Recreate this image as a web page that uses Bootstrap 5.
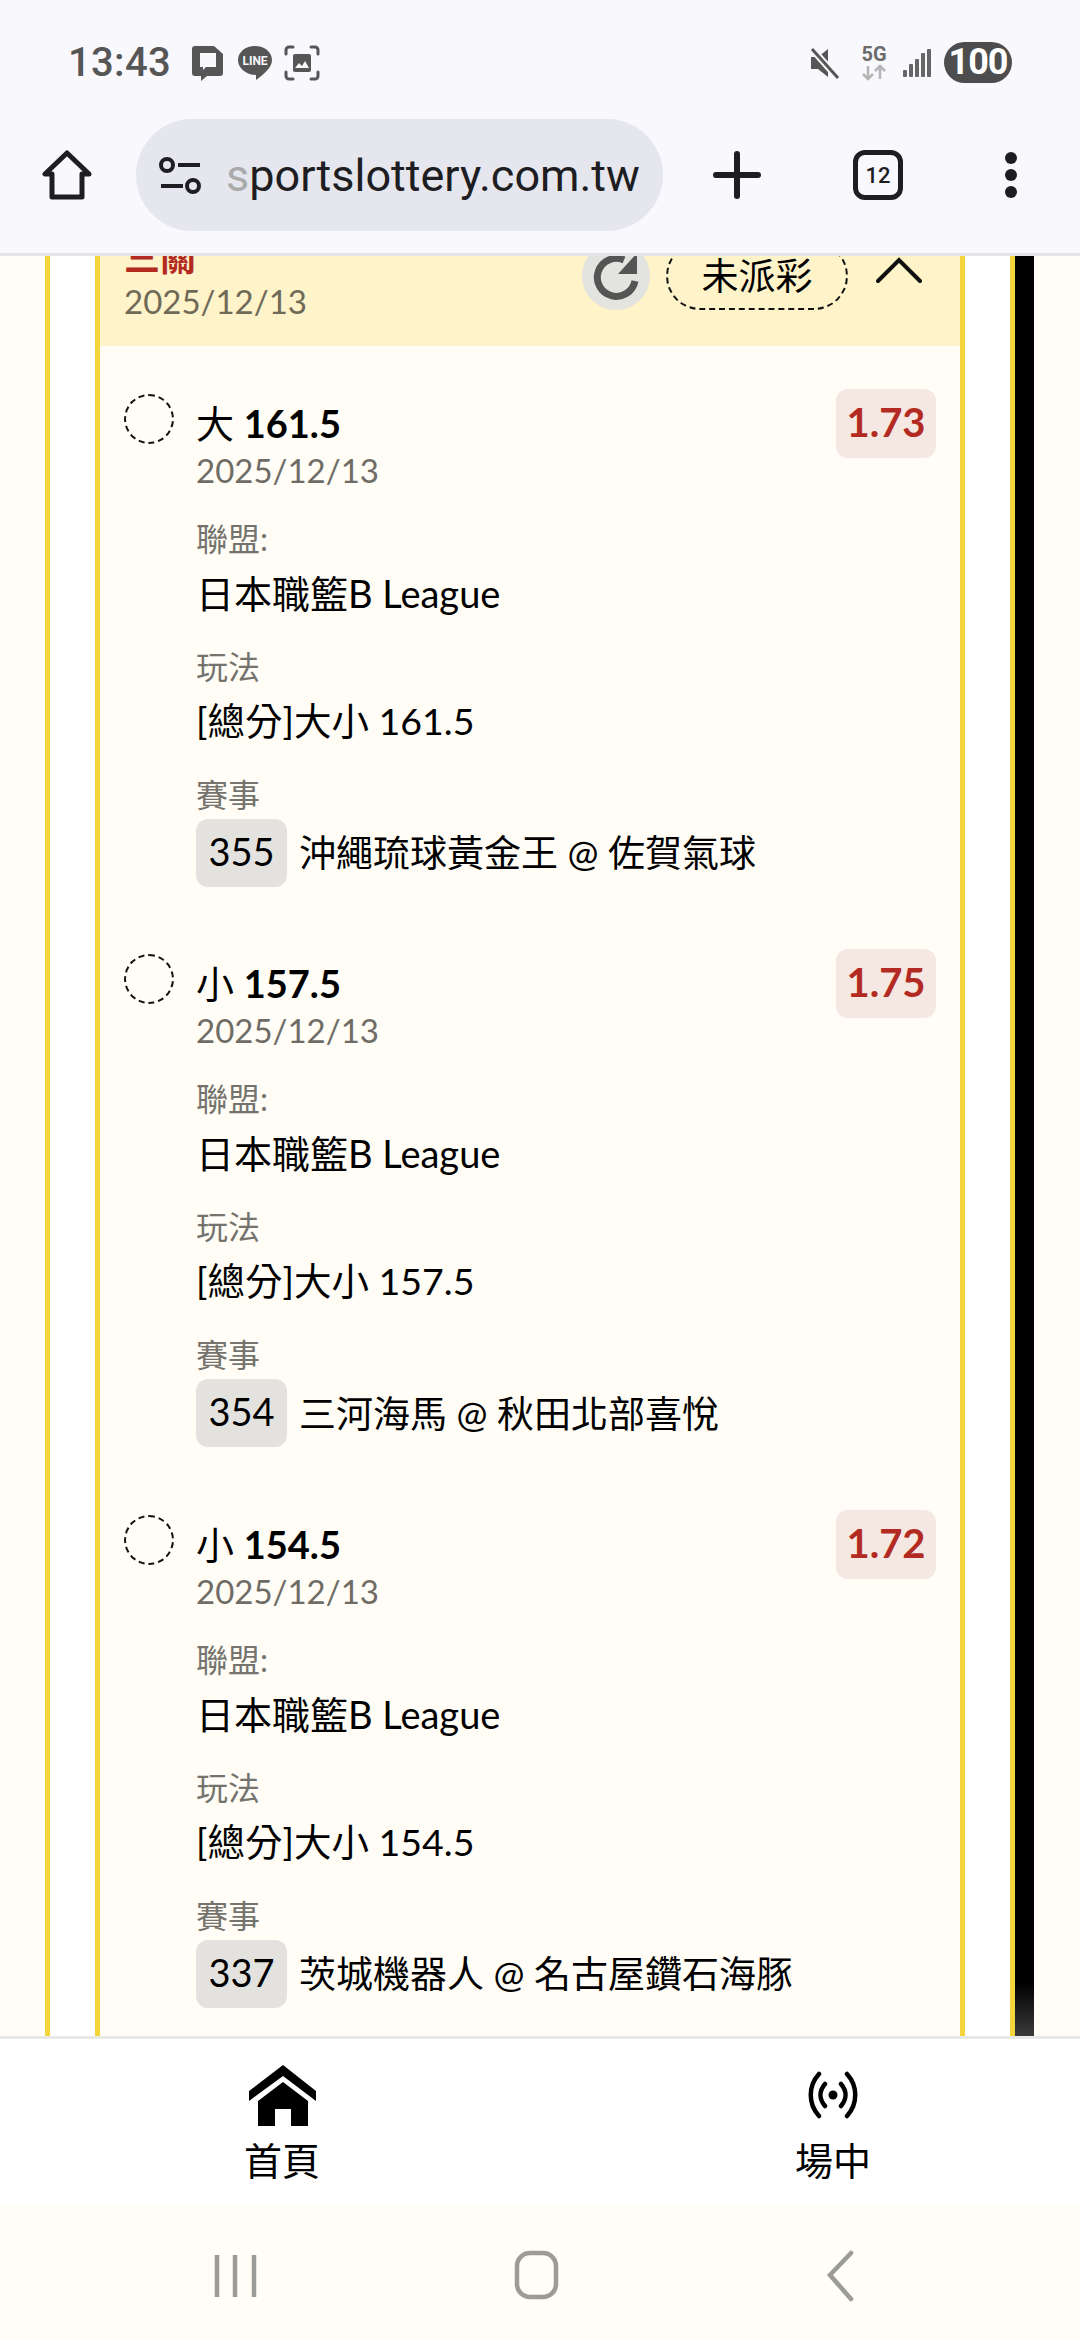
<!DOCTYPE html>
<html lang="zh-Hant">
<head>
<meta charset="utf-8">
<title>sportslottery</title>
<link href="https://cdn.jsdelivr.net/npm/bootstrap@5.3.0/dist/css/bootstrap.min.css" rel="stylesheet">
<style>
html,body{margin:0;height:2340px;overflow:hidden;background:#fffdf5;font-family:Lato,"Noto Sans CJK TC",sans-serif;color:#000}
.phone{width:1080px;height:2340px}
.chrome{height:256px;flex:none;background:#f8f8fd;border-bottom:3px solid #e4e4e8;position:relative;z-index:5}
.statusline{height:119px;padding:42px 68px 0 68px;color:#565656;font-family:Roboto,sans-serif}
.clock{font-size:40px;font-weight:500;line-height:42px;letter-spacing:.3px}
.ic-chat{margin-left:20px}
.ic-line{margin-left:13px}
.ic-scan{margin-left:11px}
.ic-5g{margin-left:20px}
.ic-bars{margin-left:15px}
.batt{background:#4d4d4d;color:#fff;font-weight:700;font-size:36px;letter-spacing:-1px;line-height:41px;height:41px;width:68px;border-radius:21px;text-align:center;margin-left:13px}
.toolbar{height:112px;padding:0 0 0 42px}
.urlpill{width:527px;height:112px;border-radius:56px;background:#e6e6ee;margin-left:44px;padding:2px 0 0 22px;font-family:Roboto,sans-serif;font-size:45px;color:#1d1d22;white-space:nowrap;overflow:hidden}
.urlicon{margin-right:22px}
.fade-s{color:#aaa}
.plusicon{margin-left:50px}
.tabcount{margin-left:92px;width:50px;height:50px;border:5px solid #1d1d22;border-radius:12px;font:500 22px Roboto,sans-serif;color:#1d1d22}
.dotsicon{margin-left:101px}
.stage{flex:1 1 auto;min-height:0;overflow:hidden;padding-left:45px}
.outercard{width:970px;flex:none;background:#fff;border-left:5px solid #f4d63c;border-right:5px solid #f4d63c;padding:0 45px}
.innercard{background:#fffdf5;border-left:5px solid #f4d63c;border-right:5px solid #f4d63c;min-height:2000px}
.scrollthumb{width:19px;flex:none;background:linear-gradient(#000 97%,#3a3a3a)}
.headband{background:#fff3c9;margin-top:-30px;height:120px;padding:0 38px 0 24px}
.redtitle{color:#b32a1f;font-weight:700;font-size:36px;line-height:46px;font-family:"Noto Sans CJK TC",sans-serif;padding-top:6px}
.greydate{color:#6f6a58;font-size:33px;line-height:40px;margin-top:3px}
.refreshbtn{width:68px;height:68px;border-radius:50%;background:#e3e3e0;margin-top:16px}
.statuspill{width:182px;height:68px;border:2px dashed #111;border-radius:34px;font-size:37px;margin:16px 0 0 16px;font-family:"Noto Sans CJK TC",sans-serif;line-height:60px;text-align:center}
.chev{margin:31px 0 0 28px}
.betlist{padding:53px 24px 0 24px}
.betrow{height:560.4px}
.radiodot{width:50px;height:50px;border:2px dashed #111;border-radius:50%;flex:none;margin-top:-5px}
.betbody{margin-left:22px}
.bettitle{font-size:38px;line-height:46px;padding-top:1px}
.bettitle b{font-weight:700}
.betdate{color:#6f6c66;font-size:33px;line-height:40px;margin-top:4px}
.fieldlabel{color:#75736d;font-size:32px;line-height:40px;margin-top:30px}
.fieldlabel.tight{margin-top:29px}
.fieldvalue{font-size:38px;line-height:48px;margin-top:10px}
.fieldvalue.rule{font-size:37.500px}
.tagnum{width:91px;height:68px;background:#e3e2de;border-radius:12px;font-size:38px;line-height:64px;text-align:center;margin-right:12px;flex:none}
.matchline{margin-top:4px;font-size:37px}
.oddsbox{width:100px;height:69px;background:#f5e8e2;border-radius:12px;color:#b22a22;font-weight:700;font-size:40px;line-height:67px;text-align:center;margin-top:-10px;flex:none}
.bottomnav{height:169px;flex:none;background:#fff;border-top:3px solid #e9e9e7;padding-left:232px;gap:451px;position:relative;z-index:5}
.navitem{width:100px;font-size:38px;line-height:46px;font-family:"Noto Sans CJK TC",sans-serif}
.navicon{height:66px;margin-top:23px;margin-bottom:8px}
.androidbar{height:135px;flex:none;background:#fffdf5}
</style>
</head>
<body>
<div class="phone d-flex flex-column">
  <header class="chrome">
    <div class="statusline d-flex justify-content-between align-items-start">
      <div class="d-flex align-items-center">
        <span class="clock">13:43</span>
        <svg class="ic-chat" width="33" height="36" viewBox="0 0 33 36"><path d="M4 1h19l9 8v19a3 3 0 0 1-3 3H16l-6 5v-5H4a3 3 0 0 1-3-3V4a3 3 0 0 1 3-3z" fill="#565656"/><path d="M9 8h16v14H15l-3 3v-3H9z" fill="#f8f8fd"/></svg>
        <svg class="ic-line" width="36" height="36" viewBox="0 0 36 36"><path d="M18 1c9.500 0 17 6.200 17 14 0 7.500-8 14-16 20v-5C9 30 1 23 1 15 1 7.200 8.500 1 18 1z" fill="#565656"/><text x="18" y="20" font-size="12" font-weight="700" font-family="Roboto,sans-serif" text-anchor="middle" fill="#f8f8fd">LINE</text></svg>
        <svg class="ic-scan" width="36" height="36" viewBox="0 0 36 36" fill="none" stroke="#565656" stroke-width="3" stroke-linecap="round"><path d="M2 9V5a3 3 0 0 1 3-3h4M27 2h4a3 3 0 0 1 3 3v4M34 27v4a3 3 0 0 1-3 3h-4M9 34H5a3 3 0 0 1-3-3v-4"/><rect x="9" y="9" width="18" height="18" rx="2" fill="#565656" stroke="none"/><path d="M11 23l4-5 3 3 3-5 4 7z" fill="#f8f8fd" stroke="none"/></svg>
      </div>
      <div class="d-flex align-items-center">
        <svg width="30" height="34" viewBox="0 0 30 34"><path d="M1 11h7l10-8v28L8 23H1z" fill="#565656"/><path d="M2 3l26 29" stroke="#f8f8fd" stroke-width="7"/><path d="M2 3l26 29" stroke="#565656" stroke-width="3"/></svg>
        <svg class="ic-5g" width="28" height="36" viewBox="0 0 28 36"><text x="14" y="16" font-size="20" font-weight="700" font-family="Roboto,sans-serif" text-anchor="middle" fill="#6b6b6b">5G</text><path d="M8 21v13M3 29l5 5 5-5M20 34V21M15 26l5-5 5 5" stroke="#b5b5b5" stroke-width="2.500" fill="none"/></svg>
        <svg class="ic-bars" width="28" height="30" viewBox="0 0 28 30" fill="#666"><rect x="0" y="22" width="4" height="7" rx="1"/><rect x="6" y="16" width="4" height="13" rx="1"/><rect x="12" y="11" width="4" height="18" rx="1"/><rect x="18" y="5" width="4" height="24" rx="1"/><rect x="24" y="1" width="4" height="28" rx="1"/></svg>
        <div class="batt">100</div>
      </div>
    </div>
    <div class="toolbar d-flex align-items-center">
      <svg class="flex-shrink-0" width="50" height="50" viewBox="0 0 50 50" fill="none" stroke="#1d1d22" stroke-width="5" stroke-linejoin="round"><path d="M25 3L3 24h7v23h30V24h7z"/></svg>
      <div class="urlpill d-flex align-items-center">
        <svg class="urlicon flex-shrink-0" width="46" height="40" viewBox="0 0 46 40" fill="none" stroke="#1d1d22" stroke-width="4"><circle cx="9" cy="9" r="6"/><path d="M20 9h22M3 30h22"/><circle cx="35" cy="30" r="6"/></svg>
        <span><span class="fade-s">s</span>portslottery.com.tw</span>
      </div>
      <svg class="plusicon flex-shrink-0" width="48" height="48" viewBox="0 0 48 48" stroke="#1d1d22" stroke-width="6" stroke-linecap="round"><path d="M24 3v42M3 24h42"/></svg>
      <div class="tabcount flex-shrink-0 d-flex align-items-center justify-content-center">12</div>
      <svg class="dotsicon flex-shrink-0" width="14" height="48" viewBox="0 0 14 48" fill="#1d1d22"><circle cx="7" cy="7" r="6"/><circle cx="7" cy="24" r="6"/><circle cx="7" cy="41" r="6"/></svg>
    </div>
  </header>

  <main class="stage d-flex">
    <div class="outercard">
      <div class="innercard">
        <div class="headband d-flex justify-content-between">
          <div>
            <div class="redtitle">三關</div>
            <div class="greydate">2025/12/13</div>
          </div>
          <div class="d-flex align-items-start">
            <div class="refreshbtn d-flex align-items-center justify-content-center">
              <svg width="50" height="50" viewBox="0 0 50 50" fill="none"><path d="M44 30A19 19 0 1 1 33 9" stroke="#555" stroke-width="7"/><path d="M46 2v21H27z" fill="#555"/></svg>
            </div>
            <div class="statuspill">未派彩</div>
            <svg class="chev" width="46" height="28" viewBox="0 0 46 28" fill="none" stroke="#111" stroke-width="4" stroke-linecap="round"><path d="M2 24L23 3l21 21"/></svg>
          </div>
        </div>
        <div class="betlist">
          <div class="betrow d-flex">
            <div class="radiodot"></div>
            <div class="betbody flex-grow-1">
              <div class="bettitle">大 <b>161.5</b></div>
              <div class="betdate">2025/12/13</div>
              <div class="fieldlabel tight">聯盟:</div>
              <div class="fieldvalue">日本職籃B League</div>
              <div class="fieldlabel">玩法</div>
              <div class="fieldvalue rule">[總分]大小 161.5</div>
              <div class="fieldlabel">賽事</div>
              <div class="matchline d-flex align-items-center"><span class="tagnum">355</span>沖繩琉球黃金王 @ 佐賀氣球</div>
            </div>
            <div class="oddsbox">1.73</div>
          </div>
          <div class="betrow d-flex">
            <div class="radiodot"></div>
            <div class="betbody flex-grow-1">
              <div class="bettitle">小 <b>157.5</b></div>
              <div class="betdate">2025/12/13</div>
              <div class="fieldlabel tight">聯盟:</div>
              <div class="fieldvalue">日本職籃B League</div>
              <div class="fieldlabel">玩法</div>
              <div class="fieldvalue rule">[總分]大小 157.5</div>
              <div class="fieldlabel">賽事</div>
              <div class="matchline d-flex align-items-center"><span class="tagnum">354</span>三河海馬 @ 秋田北部喜悅</div>
            </div>
            <div class="oddsbox">1.75</div>
          </div>
          <div class="betrow d-flex">
            <div class="radiodot"></div>
            <div class="betbody flex-grow-1">
              <div class="bettitle">小 <b>154.5</b></div>
              <div class="betdate">2025/12/13</div>
              <div class="fieldlabel tight">聯盟:</div>
              <div class="fieldvalue">日本職籃B League</div>
              <div class="fieldlabel">玩法</div>
              <div class="fieldvalue rule">[總分]大小 154.5</div>
              <div class="fieldlabel">賽事</div>
              <div class="matchline d-flex align-items-center"><span class="tagnum">337</span>茨城機器人 @ 名古屋鑽石海豚</div>
            </div>
            <div class="oddsbox">1.72</div>
          </div>
        </div>
      </div>
    </div>
    <div class="scrollthumb"></div>
  </main>

  <nav class="bottomnav d-flex">
    <div class="navitem text-center">
      <div class="navicon d-flex align-items-center justify-content-center">
        <svg width="67" height="61" viewBox="0 0 67 61" fill="#000"><path d="M34 0l33 26v10L34 11 0 36V26z"/><path d="M34 17l25 19v25H42V44H26v17H9V36z"/></svg>
      </div>
      <div>首頁</div>
    </div>
    <div class="navitem text-center">
      <div class="navicon d-flex align-items-center justify-content-center">
        <svg width="52" height="48" viewBox="0 0 52 48" fill="none" stroke="#000" stroke-width="4.500" stroke-linecap="round"><path d="M12 3C1 15 1 33 12 45M40 3c11 12 11 30 0 42M18 13c-6 7-6 15 0 22M34 13c6 7 6 15 0 22"/><circle cx="26" cy="24" r="4.500" fill="#000" stroke="none"/></svg>
      </div>
      <div>場中</div>
    </div>
  </nav>

  <div class="androidbar d-flex align-items-center justify-content-between">
    <svg width="1080" height="135" viewBox="0 0 1080 135" fill="none" stroke="#9b9b97" stroke-width="4.500"><path d="M217 92V50M235 92V50M254 92V50"/><rect x="517" y="48" width="39" height="44" rx="13"/><path d="M851 48L830 70l21 24" stroke-linecap="round"/></svg>
  </div>
</div>
</body>
</html>
